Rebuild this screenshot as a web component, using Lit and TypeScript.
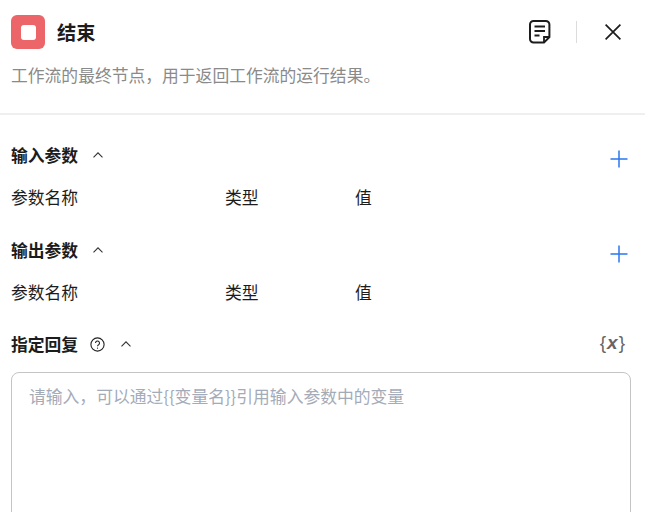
import { LitElement, html, css } from "lit";
import { customElement } from "lit/decorators.js";

const chevron = html`<svg class="chev" width="12" height="8" viewBox="0 0 12 8"><path d="M1.500 6.300 6 1.800l4.500 4.500" fill="none" stroke="#333" stroke-width="1.100"/></svg>`;
const plus = html`<svg class="plus" width="18" height="18" viewBox="0 0 18 18"><path d="M9 .5v17M.5 9h17" stroke="#2b77f0" stroke-width="1.500" fill="none"/></svg>`;

@customElement("app-root")
export class AppRoot extends LitElement {
  static styles = css`
    :host { display: block; width: 645px; height: 512px; overflow: hidden; background: #fff; color: #1c1c1c;
      font-family: "Noto Sans CJK SC", "Noto Sans", sans-serif; font-size: 16.8px; }
    .head { height: 98px; border-bottom: 2px solid #efefef; padding: 15px 24px 0 11px; }
    .title-row { display: flex; align-items: center; height: 34px; }
    .logo { width: 34px; height: 34px; border-radius: 6px; background: #ec6569; display: flex; align-items: center; justify-content: center; }
    .logo i { display: block; width: 15px; height: 15px; border-radius: 3px; background: #fff; }
    .title { margin-left: 12px; font-size: 19.2px; font-weight: 700; line-height: 34px; flex: 1; }
    .tools { display: flex; align-items: center; }
    .sep { width: 1px; height: 22px; background: #dcdcdc; margin: 0 28px 0 24px; }
    .desc { margin-top: 11px; color: #8a8a8a; line-height: 30px; }
    .section { padding: 0 14px 0 11px; }
    .s1 { margin-top: 26px; }
    .s2 { margin-top: 25px; }
    .s3 { margin-top: 24px; }
    .sec-head { display: flex; align-items: center; height: 28px; font-weight: 700; line-height: 28px; }
    .chev { margin-left: 14px; }
    .help { margin-left: 12px; }
    .help + .chev { margin-left: 15px; }
    .plus { margin-left: auto; margin-top: 8px; margin-right: 3px; }
    .cols { display: grid; grid-template-columns: 214px 130px 1fr; margin-top: 14px; line-height: 28px; }
    .vars { margin-left: auto; margin-right: 5px; margin-top: -2px; font-family: "Liberation Sans", sans-serif; font-size: 19px; font-weight: 400; color: #666; letter-spacing: 1px; }
    .vars b { font-style: italic; font-weight: 700; }
    .box { margin-top: 14px; height: 160px; border: 1px solid #c4c4c4; border-radius: 8px; padding: 9px 17px; color: #a4abb8; line-height: 28px; box-sizing: border-box; }
  `;

  render() {
    return html`
      <div class="head">
        <div class="title-row">
          <div class="logo"><i></i></div>
          <div class="title">结束</div>
          <div class="tools">
            <svg width="24" height="24" viewBox="0 0 24 24" fill="none" stroke="#1c1c1c">
              <path d="M16 22.600H5.500A3.500 3.500 0 0 1 2 19.100V4.500A3.500 3.500 0 0 1 5.500 1h12.400a3.500 3.500 0 0 1 3.500 3.500V17Z" stroke-width="2"/>
              <path d="M6.500 6.500h10.500M6.500 11h10.500M6.500 15.500h5" stroke-width="1.800"/>
              <path d="M16 22v-5h5.500" stroke-width="1.800"/>
            </svg>
            <div class="sep"></div>
            <svg width="16" height="16" viewBox="0 0 16 16" fill="none" stroke="#1c1c1c" stroke-width="1.700"><path d="M.6.600l14.800 14.800M15.400.600.600 15.400"/></svg>
          </div>
        </div>
        <div class="desc">工作流的最终节点，用于返回工作流的运行结果。</div>
      </div>
      <div class="section s1">
        <div class="sec-head"><span>输入参数</span>${chevron}${plus}</div>
        <div class="cols"><span>参数名称</span><span>类型</span><span>值</span></div>
      </div>
      <div class="section s2">
        <div class="sec-head"><span>输出参数</span>${chevron}${plus}</div>
        <div class="cols"><span>参数名称</span><span>类型</span><span>值</span></div>
      </div>
      <div class="section s3">
        <div class="sec-head"><span>指定回复</span>
          <svg class="help" width="15" height="15" viewBox="0 0 15 15" fill="none" stroke="#222" stroke-width="1.100"><circle cx="7.500" cy="7.500" r="6.600"/><path d="M5.500 6a2 2 0 1 1 3.100 1.700c-.7.400-1.100.8-1.100 1.500"/><path d="M7.500 10.600v1.100"/></svg>
          ${chevron}
          <span class="vars">{<b>x</b>}</span>
        </div>
        <div class="box">请输入，可以通过{{变量名}}引用输入参数中的变量</div>
      </div>
    `;
  }
}
